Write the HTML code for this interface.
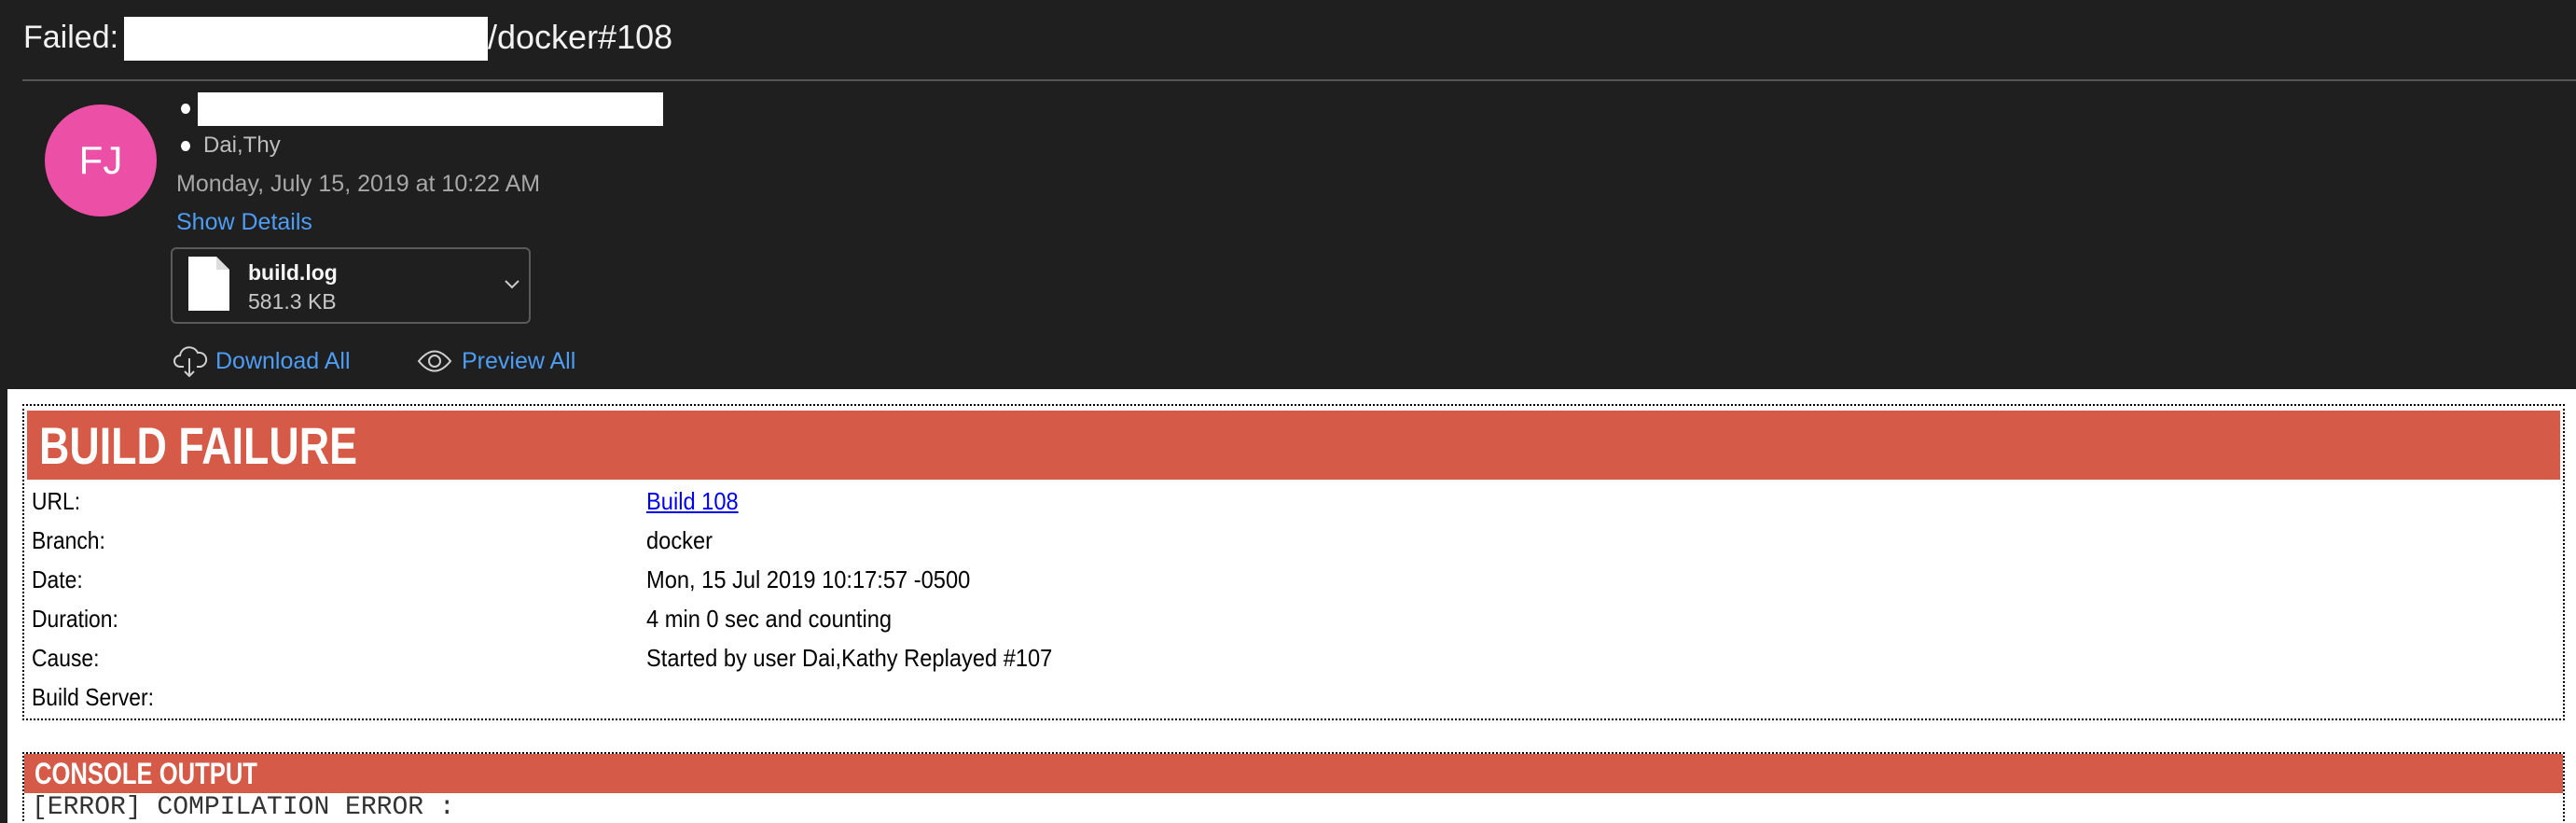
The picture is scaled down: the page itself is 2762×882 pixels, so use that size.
<!DOCTYPE html>
<html><head><meta charset="utf-8"><style>
*{margin:0;padding:0;box-sizing:border-box}
html,body{width:2762px;height:882px;overflow:hidden}
body{background:#1f1f1f;font-family:"Liberation Sans",sans-serif;position:relative}
.a{position:absolute;white-space:nowrap}
.n{transform-origin:0 0}
</style></head><body>
<div class="a" style="left:25px;top:18px;font-size:34px;line-height:44px;color:#f2f2f2">Failed:</div>
<div class="a" style="left:133px;top:18px;width:390px;height:47px;background:#fff"></div>
<div class="a" style="left:523px;top:18px;font-size:36px;line-height:44px;color:#f2f2f2">/docker#108</div>
<div class="a" style="left:24px;top:85px;width:2738px;height:2px;background:#555"></div>

<div class="a" style="left:48px;top:112px;width:120px;height:120px;border-radius:50%;background:#eb4fa6;color:#fff;font-size:42px;line-height:120px;text-align:center">FJ</div>
<div class="a" style="left:194px;top:111px;width:10px;height:11px;border-radius:50%;background:#fff"></div>
<div class="a" style="left:212px;top:99px;width:499px;height:36px;background:#fff"></div>
<div class="a" style="left:194px;top:151px;width:10px;height:11px;border-radius:50%;background:#fff"></div>
<div class="a" style="left:218px;top:142px;font-size:24px;line-height:28px;color:#bdbdbd">Dai,Thy</div>
<div class="a" style="left:189px;top:183px;font-size:25px;line-height:28px;color:#a8a8a8">Monday, July 15, 2019 at 10:22 AM</div>
<div class="a" style="left:189px;top:224px;font-size:25px;line-height:28px;color:#4d9df5">Show Details</div>

<div class="a" style="left:183px;top:265px;width:386px;height:82px;border:2px solid #5a5a5a;border-radius:6px"></div>
<svg class="a" style="left:202px;top:275px" width="44" height="58" viewBox="0 0 44 58"><path d="M0 0H30L44 14V58H0Z" fill="#fff"/><path d="M30 0V14H44" fill="#ddd"/></svg>
<div class="a" style="left:266px;top:278px;font-size:23px;line-height:28px;color:#f5f5f5;font-weight:bold">build.log</div>
<div class="a" style="left:266px;top:309px;font-size:23px;line-height:28px;color:#c8c8c8">581.3 KB</div>
<svg class="a" style="left:541px;top:300px" width="16" height="10" viewBox="0 0 16 10"><path d="M1 1L8 8L15 1" stroke="#ccc" stroke-width="2" fill="none"/></svg>

<svg class="a" style="left:185px;top:369px" width="38" height="36" viewBox="0 0 38 36"><path d="M12 24H8a6 6 0 0 1 0-12a10 10 0 0 1 19-3a7 7 0 0 1 3 15h-4" stroke="#cfcfcf" stroke-width="2" fill="none"/><path d="M18 15V34M13 29L18 34L23 29" stroke="#cfcfcf" stroke-width="2" fill="none"/></svg>
<div class="a" style="left:231px;top:373px;font-size:25px;line-height:28px;color:#4d9df5">Download All</div>
<svg class="a" style="left:447px;top:372px" width="38" height="30" viewBox="0 0 38 30"><path d="M2 15Q19 -6 36 15Q19 36 2 15Z" stroke="#cfcfcf" stroke-width="2" fill="none"/><circle cx="19" cy="15" r="6" stroke="#cfcfcf" stroke-width="2" fill="none"/></svg>
<div class="a" style="left:495px;top:373px;font-size:25px;line-height:28px;color:#4d9df5">Preview All</div>

<div class="a" style="left:8px;top:417px;width:2754px;height:500px;background:#fff"></div>
<div class="a" style="left:24px;top:433px;width:2726px;height:339px;border:2px dotted #000"></div>
<div class="a" style="left:29px;top:440px;width:2716px;height:74px;background:#d65a48"></div>
<div class="a n" style="left:42px;top:446px;font-size:56px;line-height:64px;font-weight:bold;color:#fff;transform:scaleX(0.8)">BUILD FAILURE</div>
<div class="a n" style="left:34px;top:516px;font-size:26px;line-height:42px;color:#000;transform:scaleX(0.88)">URL:<br>Branch:<br>Date:<br>Duration:<br>Cause:<br>Build Server:</div>
<div class="a n" style="left:693px;top:516px;font-size:26px;line-height:42px;color:#000;transform:scaleX(0.91)"><span style="color:#0000ee;text-decoration:underline">Build 108</span><br>docker<br>Mon, 15 Jul 2019 10:17:57 -0500<br>4 min 0 sec and counting<br>Started by user Dai,Kathy Replayed #107</div>

<div class="a" style="left:24px;top:806px;width:2726px;height:90px;border:2px dotted #000"></div>
<div class="a" style="left:26px;top:808px;width:2722px;height:42px;background:#d65a48"></div>
<div class="a n" style="left:37px;top:809px;font-size:32px;line-height:40px;font-weight:bold;color:#fff;transform:scaleX(0.8)">CONSOLE OUTPUT</div>
<div class="a" style="left:34px;top:851px;font-family:'Liberation Mono',monospace;font-size:28px;line-height:30px;color:#333">[ERROR] COMPILATION ERROR :</div>
</body></html>
